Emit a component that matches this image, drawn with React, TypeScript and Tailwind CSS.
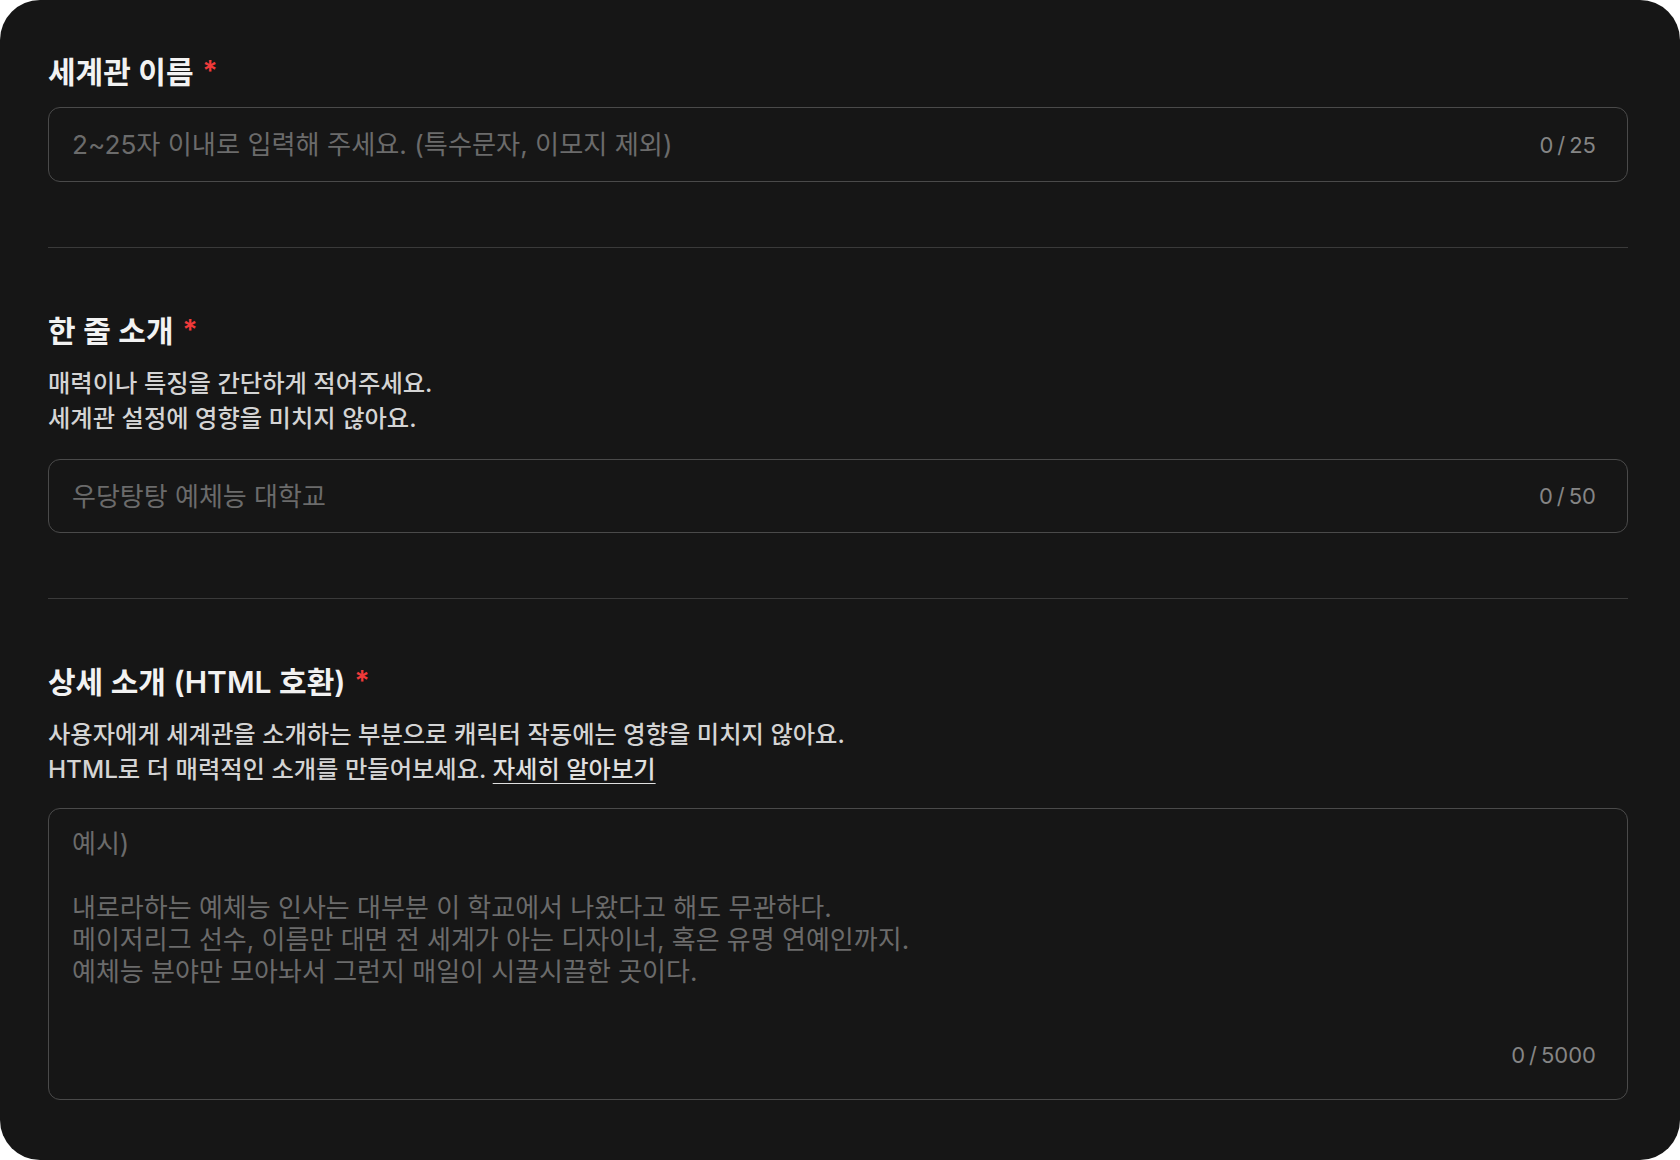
import React, { useState } from 'react';

const FONT = { fontFamily: 'Inter, "Noto Sans CJK KR", sans-serif' };

const Label = ({ text }: { text: string }) => (
  <div className="flex items-start gap-[9px] leading-[36px]">
    <h2 className="text-[30px] font-semibold text-[#f2f2f2]">{text}</h2>
    <span className="text-[28px] font-semibold text-[#f03a3a] leading-[34px]">*</span>
  </div>
);

const Counter = ({ count, max }: { count: number; max: number }) => (
  <span className="text-[22px] text-[#858585] leading-[32px]">
    {count}
    <span className="mx-[4px]">/</span>
    {max}
  </span>
);

const Divider = () => <div className="h-px bg-[#3a3a3a] my-[65px]" />;

const App = () => {
  const [name, setName] = useState('');
  const [summary, setSummary] = useState('');
  const [detail, setDetail] = useState('');

  return (
    <div className="min-h-screen bg-white" style={FONT}>
      <div className="bg-[#161616] rounded-[40px] pl-12 pr-[52px] pt-[54px] pb-[60px]">
        {/* 세계관 이름 */}
        <section>
          <Label text="세계관 이름" />
          <div className="mt-[17px] h-[75px] flex items-center border border-[#4a4a4a] rounded-[12px] pl-[23px] pr-[31px]">
            <input
              value={name}
              maxLength={25}
              onChange={(e) => setName(e.target.value)}
              placeholder="2~25자 이내로 입력해 주세요. (특수문자, 이모지 제외)"
              className="flex-1 bg-transparent outline-none text-[26.2px] text-[#e5e5e5] placeholder:text-[#6b6b6b]"
            />
            <Counter count={name.length} max={25} />
          </div>
        </section>

        <Divider />

        {/* 한 줄 소개 */}
        <section>
          <Label text="한 줄 소개" />
          <p className="mt-[17px] text-[24.3px] font-medium leading-[35px] text-[#d4d4d4]">
            매력이나 특징을 간단하게 적어주세요.
            <br />
            세계관 설정에 영향을 미치지 않아요.
          </p>
          <div className="mt-[23px] h-[74px] flex items-center border border-[#4a4a4a] rounded-[12px] pl-[23px] pr-[31px]">
            <input
              value={summary}
              maxLength={50}
              onChange={(e) => setSummary(e.target.value)}
              placeholder="우당탕탕 예체능 대학교"
              className="flex-1 bg-transparent outline-none text-[26px] text-[#e5e5e5] placeholder:text-[#6b6b6b]"
            />
            <Counter count={summary.length} max={50} />
          </div>
        </section>

        <Divider />

        {/* 상세 소개 */}
        <section>
          <Label text="상세 소개 (HTML 호환)" />
          <p className="mt-[17px] text-[24.3px] font-medium leading-[35px] text-[#d4d4d4]">
            사용자에게 세계관을 소개하는 부분으로 캐릭터 작동에는 영향을 미치지 않아요.
            <br />
            HTML로 더 매력적인 소개를 만들어보세요.{' '}
            <a href="#" className="underline underline-offset-[5px] decoration-1 text-[#e0e0e0]">
              자세히 알아보기
            </a>
          </p>
          <div className="mt-[21px] h-[292px] flex flex-col border border-[#4a4a4a] rounded-[12px] pl-[23px] pr-[31px] pt-[19px] pb-[28px]">
            <textarea
              value={detail}
              maxLength={5000}
              onChange={(e) => setDetail(e.target.value)}
              placeholder={
                '예시)\n\n내로라하는 예체능 인사는 대부분 이 학교에서 나왔다고 해도 무관하다.\n메이저리그 선수, 이름만 대면 전 세계가 아는 디자이너, 혹은 유명 연예인까지.\n예체능 분야만 모아놔서 그런지 매일이 시끌시끌한 곳이다.'
              }
              className="flex-1 resize-none bg-transparent outline-none text-[26px] leading-[32px] text-[#e5e5e5] placeholder:text-[#6b6b6b]"
            />
            <div className="self-end">
              <Counter count={detail.length} max={5000} />
            </div>
          </div>
        </section>
      </div>
    </div>
  );
};

export default App;
